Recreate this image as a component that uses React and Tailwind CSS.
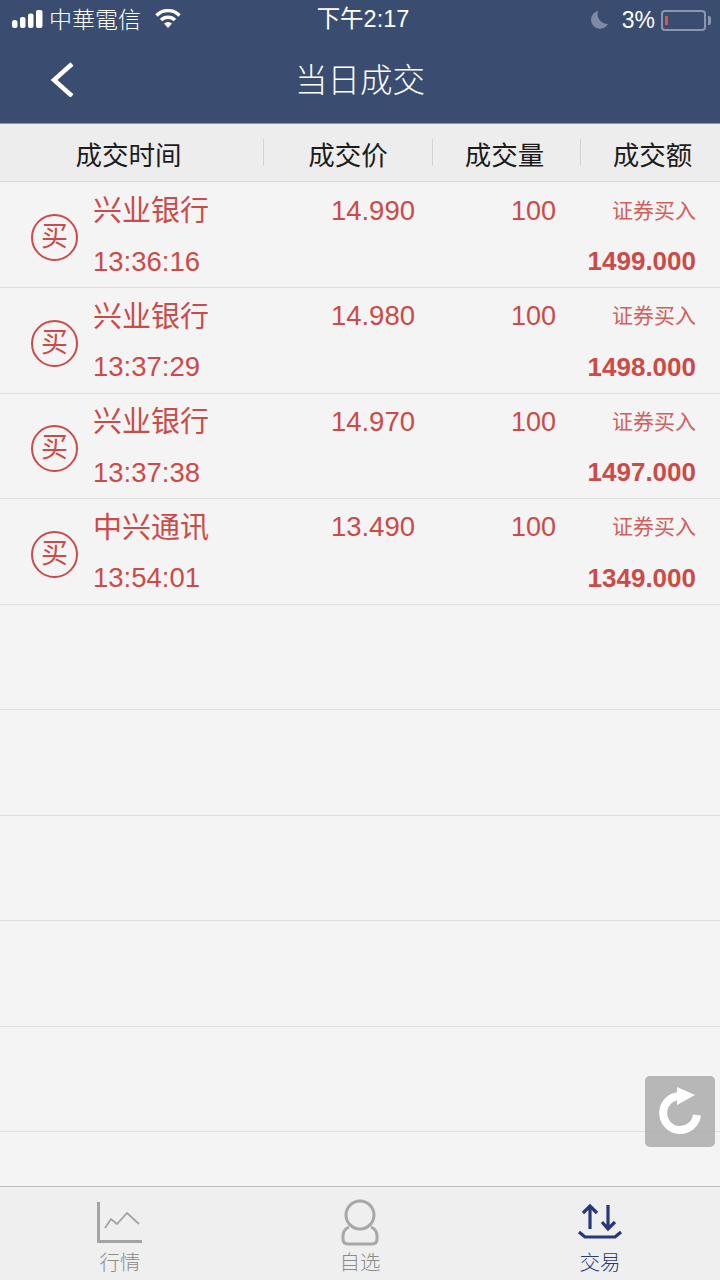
const CJK = "font-['Liberation_Sans','Noto_Sans_CJK_SC',sans-serif]";

const trades = [
  { name: '兴业银行', price: '14.990', qty: '100', time: '13:36:16', amount: '1499.000' },
  { name: '兴业银行', price: '14.980', qty: '100', time: '13:37:29', amount: '1498.000' },
  { name: '兴业银行', price: '14.970', qty: '100', time: '13:37:38', amount: '1497.000' },
  { name: '中兴通讯', price: '13.490', qty: '100', time: '13:54:01', amount: '1349.000' },
];

function StatusBar() {
  return (
    <div className="flex items-center h-[40px] px-[12px] text-white">
      <div className="flex-1 flex items-center">
        <svg width="31" height="20" viewBox="0 0 31 20" fill="#fff">
          <rect x="0" y="10" width="5.5" height="8" rx="2.5" />
          <rect x="8" y="7" width="5.5" height="11" rx="2" />
          <rect x="16" y="3.5" width="5.5" height="14.5" rx="2" />
          <rect x="24" y="0" width="6.5" height="18" rx="2" />
        </svg>
        <span className="ml-[6px] text-[23px] leading-none font-light">中華電信</span>
        <svg className="ml-[14px] mb-[2px]" width="26" height="20" viewBox="0 0 26 20" fill="none" stroke="#fff" strokeWidth="3.5">
          <path d="M1.5 6.5 A16 16 0 0 1 24.5 6.5" />
          <path d="M6 11 A10 10 0 0 1 20 11" />
          <path d="M13 19 L9 14.5 A6 6 0 0 1 17 14.5 Z" fill="#fff" stroke="none" />
        </svg>
      </div>
      <span className="ml-[3px] text-[23.5px] leading-none">下午2:17</span>
      <div className="flex-1 flex items-center justify-end mr-[-3px]">
        <svg width="18" height="18" viewBox="0 0 18 18" fill="#7f8ba3">
          <path d="M8 0 A9 9 0 1 0 18 13 A10 10 0 0 1 8 0 Z" />
        </svg>
        <span className="ml-[14px] text-[23px] leading-none font-light">3%</span>
        <div className="ml-[6px] w-[45px] h-[21px] rounded-[4px] border-2 border-[#8a96ad] pl-[2px] py-[4px]">
          <div className="w-[3px] h-full bg-[#d9534f]" />
        </div>
        <div className="ml-[2px] w-[3px] h-[9px] rounded-r-[2px] bg-[#8a96ad]" />
      </div>
    </div>
  );
}

function Header() {
  const cols = [
    { label: '成交时间', w: 'w-[264px]', extra: 'pr-[6px]' },
    { label: '成交价', w: 'w-[169px]', extra: '' },
    { label: '成交量', w: 'w-[148px]', extra: 'pr-[4px]' },
    { label: '成交额', w: 'flex-1', extra: 'pl-[4px]' },
  ];
  return (
    <div className="flex items-center h-[59px] bg-[#ededed] border-t border-b border-t-[#8d98ad] border-b-[#d8d8d8] text-[26.5px] text-[#1c1c1c]">
      {cols.map((c, i) => (
        <div key={c.label} className={`${c.w} h-[27px] flex items-center justify-center ${c.extra} ${i < 3 ? 'border-r border-[#d4d4d4]' : ''}`}>
          <span className="mt-[8px]">{c.label}</span>
        </div>
      ))}
    </div>
  );
}

function TradeRow({ trade }) {
  return (
    <div className="h-[105.5px] shrink-0 flex border-b border-[#dfdfdf] text-[#cc4a47]">
      {trade && (
        <>
          <div className="w-[93px] pl-[31px] pt-[31.5px]">
            <div className="w-[47px] h-[47px] rounded-full border-2 border-[#cc4a47] flex items-center justify-center text-[27px] leading-none">买</div>
          </div>
          <div className="flex-1 pr-[24px] pt-[9px] flex flex-col gap-[10px]">
            <div className="h-[40px] flex items-center">
              <span className="w-[218px] text-[29px] leading-none">{trade.name}</span>
              <span className="w-[104px] mb-[2px] text-right text-[27.5px] leading-none">{trade.price}</span>
              <span className="w-[141px] mb-[1px] text-right text-[27px] leading-none">{trade.qty}</span>
              <span className="flex-1 mb-[3px] text-right text-[21px] leading-none text-[#d2605d]">证券买入</span>
            </div>
            <div className="h-[40px] flex items-center justify-between">
              <span className="text-[27.5px] leading-none">{trade.time}</span>
              <span className="mb-[1px] text-[26px] leading-none font-bold">{trade.amount}</span>
            </div>
          </div>
        </>
      )}
    </div>
  );
}

function Tab({ label, active, children }) {
  return (
    <div className="flex flex-col items-center pt-[11px]">
      {children}
      <span className={`mt-[5px] text-[20.5px] leading-[24px] font-light ${active ? 'text-[#2a3a78]' : 'text-[#8c8c8c]'}`}>{label}</span>
    </div>
  );
}

export default function App() {
  const rows = [...trades, null, null, null, null, null];
  return (
    <div className={`w-[720px] h-[1280px] relative overflow-hidden flex flex-col bg-[#f4f4f4] ${CJK}`}>
      <div className="bg-[#3a4d70] h-[123px] shrink-0">
        <StatusBar />
        <div className="relative h-[83px] flex items-center justify-center pb-[1px]">
          <svg className="absolute left-[50px] top-[21px]" width="26" height="36" viewBox="0 0 26 36" fill="none" stroke="#fff" strokeWidth="4.5">
            <polyline points="22,3 4,19 22,35" />
          </svg>
          <span className="text-[32.5px] leading-none text-white font-light">当日成交</span>
        </div>
      </div>
      <Header />
      <div className="flex-1 flex flex-col overflow-hidden pt-[0.5px]">
        {rows.map((t, i) => (
          <TradeRow key={i} trade={t} />
        ))}
      </div>
      <div className="h-[94px] shrink-0 grid grid-cols-3 bg-[#efefef] border-t border-[#bdbdbd]">
        <Tab label="行情">
          <svg width="60" height="48" viewBox="0 0 60 48" fill="none" stroke="#a3a3a3">
            <path d="M8.5 4 V43.5 H52" strokeWidth="3" />
            <path d="M15 30 L21 21 L27 26 L37 15 L49 26" strokeWidth="1.8" />
          </svg>
        </Tab>
        <Tab label="自选">
          <svg width="60" height="48" viewBox="0 0 60 48" fill="none" stroke="#a8a8a8" strokeWidth="3">
            <circle cx="30" cy="17" r="14" />
            <path d="M19 29 C14.5 31 13 34 13 38 V41 Q13 46 18 46 H42 Q47 46 47 41 V38 C47 34 45.5 31 41 29" />
          </svg>
        </Tab>
        <Tab label="交易" active>
          <svg width="60" height="48" viewBox="0 0 60 48" fill="none" stroke="#26377a" strokeWidth="3.2">
            <path d="M20 9 V31 M13 15 L20 8 L27 15" />
            <path d="M38 7 V30 M32 24 L38 31 L45 24" />
            <path d="M9 34 L15 39 H45 L51 34" />
          </svg>
        </Tab>
      </div>
      <div className="absolute left-[645px] top-[1076px] w-[70px] h-[71px] rounded-[5px] bg-[#a8a8a8]/80">
        <svg width="70" height="71" viewBox="0 0 70 71" fill="none">
          <path d="M52 39 A17 17 0 1 1 35 20" stroke="#fff" strokeWidth="8" />
          <path d="M32 11 L50 19 L32 29 Z" fill="#fff" />
        </svg>
      </div>
    </div>
  );
}
